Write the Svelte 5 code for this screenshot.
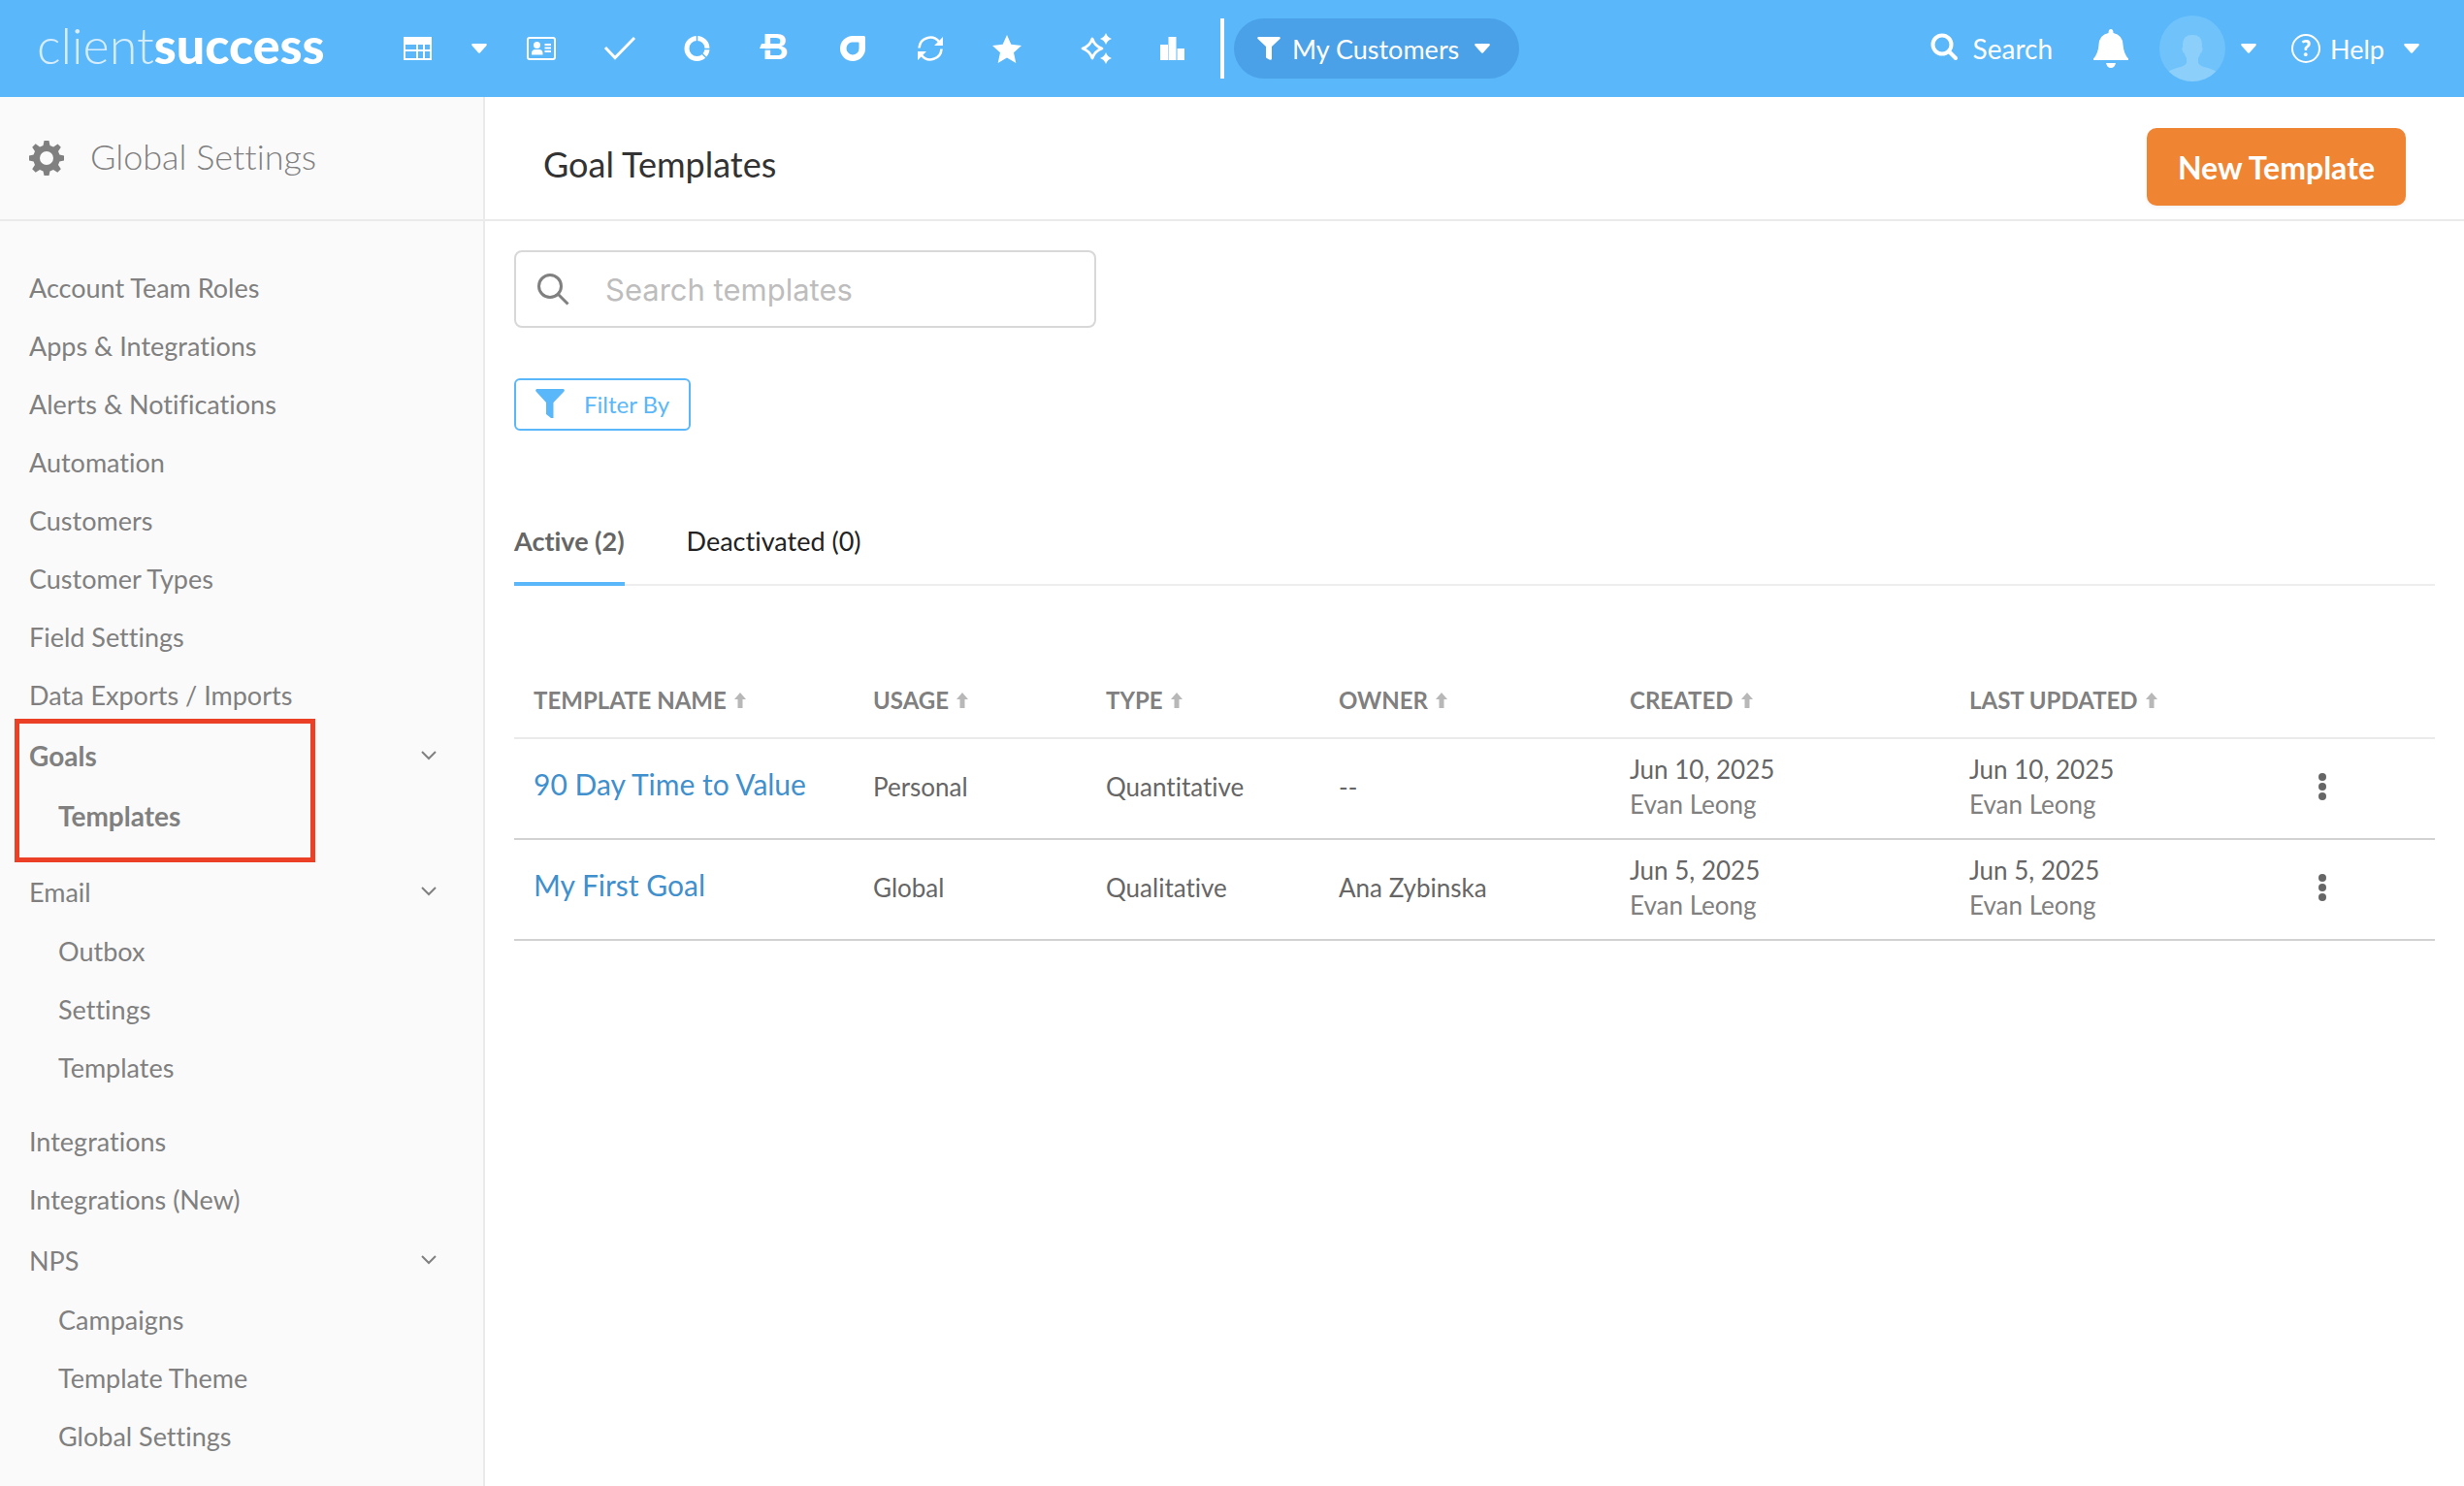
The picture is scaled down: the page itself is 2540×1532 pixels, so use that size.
<script lang="ts">
    interface NavItem {
        label: string;
        children?: string[];
    }

    interface Template {
        name: string;
        usage: string;
        type: string;
        owner: string;
        created: string;
        createdBy: string;
        updated: string;
        updatedBy: string;
    }

    const settings: NavItem[] = [
        { label: "Account Team Roles" },
        { label: "Apps & Integrations" },
        { label: "Alerts & Notifications" },
        { label: "Automation" },
        { label: "Customers" },
        { label: "Customer Types" },
        { label: "Field Settings" },
        { label: "Data Exports / Imports" },
        { label: "Goals", children: ["Templates"] },
        { label: "Email", children: ["Outbox", "Settings", "Templates"] },
        { label: "Integrations" },
        { label: "Integrations (New)" },
        { label: "NPS", children: ["Campaigns", "Template Theme", "Global Settings"] },
    ];

    const columns = ["Template Name", "Usage", "Type", "Owner", "Created", "Last Updated"];

    const templates: Template[] = [
        {
            name: "90 Day Time to Value",
            usage: "Personal",
            type: "Quantitative",
            owner: "--",
            created: "Jun 10, 2025",
            createdBy: "Evan Leong",
            updated: "Jun 10, 2025",
            updatedBy: "Evan Leong",
        },
        {
            name: "My First Goal",
            usage: "Global",
            type: "Qualitative",
            owner: "Ana Zybinska",
            created: "Jun 5, 2025",
            createdBy: "Evan Leong",
            updated: "Jun 5, 2025",
            updatedBy: "Evan Leong",
        },
    ];

    let activeGroup = $state("Goals");
    let closed = $state<string[]>([]);
    let tab = $state("active");
    let search = $state("");

    let rows = $derived(
        tab === "active"
            ? templates.filter((t) => t.name.toLowerCase().includes(search.toLowerCase()))
            : [],
    );

    function toggleGroup(label: string) {
        closed = closed.includes(label)
            ? closed.filter((item) => item !== label)
            : [...closed, label];
    }
</script>

{#snippet caret()}
    <svg class="caret" viewBox="0 0 16 10" fill="currentColor" aria-hidden="true">
        <path d="M1 0h14q1.500 .6 .5 2L9 9.300q-1 1-2 0L.5 2Q-.5 .6 1 0z" />
    </svg>
{/snippet}

<header class="topbar">
    <a class="logo" href="#home"><span>client</span><strong>success</strong></a>

    <nav class="tools" aria-label="Main">
        <a href="#dashboard" aria-label="Dashboard">
            <svg viewBox="0 0 32 32">
                <path
                    fill="currentColor"
                    fill-rule="evenodd"
                    d="M2 4h29v24H2zM4 12v5h11v-5zM17 12v5h5v-5zM24 12v5h5v-5zM4 19v7h11v-7zM17 19v7h5v-7zM24 19v7h5v-7z"
                />
            </svg>
        </a>
        <button class="slim" aria-label="More dashboards">{@render caret()}</button>
        <a href="#contacts" aria-label="Contacts">
            <svg viewBox="0 0 32 32" fill="currentColor">
                <rect x="2" y="5" width="28" height="22" rx="2" fill="none" stroke="currentColor" stroke-width="2" />
                <circle cx="11.500" cy="12.500" r="3.500" />
                <path d="M6 22.500V21q0-4 4-4h3.500q4 0 4 4v1.500z" />
                <path d="M19.500 12h6.500M19.500 15.500h6.500M19.500 19h6.500" stroke="currentColor" stroke-width="1.800" />
            </svg>
        </a>
        <a href="#tasks" aria-label="Tasks">
            <svg viewBox="0 0 32 32">
                <path d="M2 15l10 10.500L32 5" fill="none" stroke="currentColor" stroke-width="3" />
            </svg>
        </a>
        <a href="#lifecycle" aria-label="Lifecycle">
            <svg viewBox="0 0 32 32" fill="none">
                <circle cx="16.500" cy="16" r="10.500" stroke="currentColor" stroke-width="5" />
                <path class="cut" d="M16.500 9V2M22 16.500h8M22 21.500l5 5" />
            </svg>
        </a>
        <a href="#billing" aria-label="Billing">
            <svg viewBox="0 0 32 32">
                <text class="mark" x="4" y="27">B</text>
                <path class="cut" d="M6 17h15" />
                <path fill="currentColor" d="M3 11h19v5H1z" />
            </svg>
        </a>
        <a href="#pulse" aria-label="Pulse">
            <svg viewBox="0 0 32 32">
                <path
                    fill="currentColor"
                    fill-rule="evenodd"
                    d="M17 3h11.500q1.500 0 1.500 1.500V16A13 13 0 1 1 17 3zM18 9.500a6.500 6.500 0 1 0 5.500 6.500v-5.500q0-1-1-1z"
                />
            </svg>
        </a>
        <a href="#renewals" aria-label="Renewals">
            <svg viewBox="0 0 32 32" fill="none" stroke="currentColor" stroke-width="2.600">
                <path d="M5.500 15.500A11.500 11.500 0 0 1 26 9M28.500 16.500A11.500 11.500 0 0 1 8 23" />
                <path d="M30 4v9h-9zM4 28v-9h9z" fill="currentColor" stroke="none" />
            </svg>
        </a>
        <a href="#favorites" aria-label="Favorites">
            <svg viewBox="0 0 32 32" fill="currentColor">
                <path d="M16 2l4.300 9.800L31 13l-8 7.200L25.300 31 16 25.400 6.700 31 9 20.200 1 13l10.700-1.200z" />
            </svg>
        </a>
        <a class="spaced" href="#insights" aria-label="Insights">
            <svg viewBox="0 0 32 32">
                <path
                    d="M12 6q2.500 7.500 10 10-7.500 2.500-10 10Q9.500 18.500 2 16q7.500-2.500 10-10z"
                    fill="none"
                    stroke="currentColor"
                    stroke-width="2.800"
                    stroke-linejoin="round"
                />
                <path
                    fill="currentColor"
                    d="M26 0q1.500 4.500 6 6-4.500 1.500-6 6-1.500-4.500-6-6 4.500-1.500 6-6zM26 20q1.500 4.500 6 6-4.500 1.500-6 6-1.500-4.500-6-6 4.500-1.500 6-6z"
                />
            </svg>
        </a>
        <a href="#reports" aria-label="Reports">
            <svg viewBox="0 0 32 32" fill="currentColor">
                <path d="M2 12h8v16H2zM10.500 4h8v24h-8zM19.500 16h7.500v12h-7.500z" />
            </svg>
        </a>
    </nav>

    <div class="segment">
        <button class="pill">
            <svg class="funnel" viewBox="0 0 24 24" fill="currentColor">
                <path d="M1 0h22q1.500 .8 .5 2L15 10v13q-.5 1-2 .8L9.800 22Q9 21.500 9 20.500V10L.5 2Q-.5 .8 1 0z" />
            </svg>
            My Customers
            {@render caret()}
        </button>
    </div>

    <div class="account">
        <button class="find">
            <svg viewBox="0 0 28 28" fill="none" stroke="currentColor" stroke-width="4">
                <circle cx="12" cy="12" r="9.500" />
                <path d="M19 19l7 7" stroke-linecap="round" />
            </svg>
            Search
        </button>
        <button class="bell" aria-label="Notifications">
            <svg viewBox="0 0 36 40" fill="currentColor">
                <path d="M18 0q2.500 0 2.500 4Q30 6 30.500 16q.5 9 5.500 14.500V32H0v-1.500Q5 25 5.500 16 6 6 15.500 4 15.500 0 18 0zM13 35h10q-1 5-5 5t-5-5z" />
            </svg>
        </button>
        <button class="profile" aria-label="Account">
            <svg class="avatar" viewBox="0 0 68 68">
                <circle cx="34" cy="34" r="34" fill="#70c3fa" />
                <path
                    fill="#8ccffb"
                    d="M34 20q10 0 10 9.500 0 1.500-.3 3 1.600.5.600 3.500-.6 2.500-2 3Q41.500 42 40 43.500V49q2 3 8 4.500 7 2 10.300 4.200A34 34 0 0 1 9.700 57.700Q13 55.500 20 53.500q6-1.500 8-4.500v-5.500Q26.500 42 25.700 39q-1.400-.5-2-3-1-3 .6-3.500-.3-1.500-.3-3Q24 20 34 20z"
                />
            </svg>
            {@render caret()}
        </button>
        <button class="help">
            <span class="question">?</span>
            Help
            {@render caret()}
        </button>
    </div>
</header>

<div class="layout">
    <aside>
        <h2>
            <svg viewBox="0 0 36 36">
                <path
                    fill="currentColor"
                    fill-rule="evenodd"
                    d="M15.500 0h5l1 5 3.600 1.500L29.500 3.500 32.800 6.800 30 11l1.400 3.500L36 15.500v5l-4.600 1L30 25l2.800 4.300-3.500 3.500L25 30l-3.500 1.400-1 4.600h-5l-1-4.600L11 30l-4.300 2.800-3.500-3.500L6 25l-1.400-3.500L0 20.500v-5l4.600-1L6 11 3.200 6.700l3.500-3.500L11 6.500 14.500 5zM18 11a7 7 0 1 0 0 14 7 7 0 1 0 0-14z"
                />
            </svg>
            <span>Global Settings</span>
        </h2>

        <nav class="menu" aria-label="Global settings">
            {#each settings as item}
                {#if item.children}
                    <div class="group" class:current={activeGroup === item.label}>
                        <button
                            class="group-toggle"
                            aria-expanded={!closed.includes(item.label)}
                            onclick={() => toggleGroup(item.label)}
                        >
                            {item.label}
                            <svg viewBox="0 0 16 10" fill="none" stroke="currentColor" stroke-width="2">
                                <path d="M1 1l7 7 7-7" />
                            </svg>
                        </button>
                        {#if !closed.includes(item.label)}
                            {#each item.children as child}
                                <a class="child" href="#settings" onclick={() => (activeGroup = item.label)}>
                                    {child}
                                </a>
                            {/each}
                        {/if}
                    </div>
                {:else}
                    <a href="#settings">{item.label}</a>
                {/if}
            {/each}
        </nav>
    </aside>

    <main>
        <div class="page-head">
            <h1>Goal Templates</h1>
            <button class="primary">New Template</button>
        </div>

        <div class="content">
            <label class="search-box">
                <svg viewBox="0 0 32 32" fill="none" stroke="currentColor" stroke-width="3">
                    <circle cx="13" cy="13" r="11.500" />
                    <path d="M21.500 21.500l10 10" />
                </svg>
                <input type="text" placeholder="Search templates" aria-label="Search templates" bind:value={search} />
            </label>

            <button class="filter">
                <svg viewBox="0 0 30 30" fill="currentColor">
                    <path d="M1 0h28q1.500 1 .5 2.500L18.500 14v16h-2.500l-5-4V14L.5 2.500Q-.5 1 1 0z" />
                </svg>
                Filter By
            </button>

            <div class="tabs" role="tablist">
                <button role="tab" aria-selected={tab === "active"} onclick={() => (tab = "active")}>
                    Active (2)
                </button>
                <button role="tab" aria-selected={tab === "deactivated"} onclick={() => (tab = "deactivated")}>
                    Deactivated (0)
                </button>
            </div>

            <table>
                <colgroup>
                    <col class="wide" />
                    <col class="narrow" />
                    <col class="narrow" />
                    <col class="medium" />
                    <col class="wide" />
                    <col class="wide" />
                    <col />
                </colgroup>
                <thead>
                    <tr>
                        {#each columns as column}
                            <th scope="col">
                                <button class="sort">
                                    {column}
                                    <svg viewBox="0 0 12 16" fill="currentColor">
                                        <path d="M6 0l6 7H8.500v9h-5V7H0z" />
                                    </svg>
                                </button>
                            </th>
                        {/each}
                        <th></th>
                    </tr>
                </thead>
                <tbody>
                    {#each rows as row}
                        <tr>
                            <td><a class="name" href="#template">{row.name}</a></td>
                            <td>{row.usage}</td>
                            <td>{row.type}</td>
                            <td>{row.owner}</td>
                            <td>
                                {row.created}
                                <span class="by">{row.createdBy}</span>
                            </td>
                            <td>
                                {row.updated}
                                <span class="by">{row.updatedBy}</span>
                            </td>
                            <td>
                                <button class="more" aria-label="Actions for {row.name}">
                                    <svg viewBox="0 0 8 28" fill="currentColor">
                                        <circle cx="4" cy="4" r="4" />
                                        <circle cx="4" cy="14" r="4" />
                                        <circle cx="4" cy="24" r="4" />
                                    </svg>
                                </button>
                            </td>
                        </tr>
                    {/each}
                </tbody>
            </table>
        </div>
    </main>
</div>

<style>
    :global(body) {
        margin: 0;
        background: #fff;
        color: #666;
        font-family: Lato, "Open Sans", sans-serif;
        font-size: 27px;
        font-variant-ligatures: none;
    }

    :global(#app) {
        min-height: 100vh;
        display: flex;
        flex-direction: column;
    }

    a {
        color: inherit;
        text-decoration: none;
    }

    button {
        padding: 0;
        border: none;
        background: none;
        color: inherit;
        font: inherit;
        font-variant-ligatures: none;
        cursor: pointer;
    }

    svg {
        display: block;
        flex: none;
        overflow: visible;
    }

    .topbar {
        display: flex;
        align-items: center;
        box-sizing: border-box;
        height: 100px;
        padding: 0 46px 0 38px;
        background: #5ab7fa;
        color: #fff;
    }

    .logo {
        width: 352px;
        padding-bottom: 8px;
        font-size: 52px;
        line-height: 56px;
    }

    .logo span {
        font-weight: 300;
        opacity: 0.75;
    }

    .logo strong {
        font-weight: 900;
    }

    .tools {
        display: flex;
        align-items: center;
    }

    .tools a,
    .tools button {
        display: flex;
        justify-content: center;
        width: 80px;
    }

    .tools .slim {
        width: 48px;
    }

    .tools .spaced {
        margin-left: 12px;
    }

    .tools a svg {
        width: 32px;
        height: 32px;
    }

    .cut {
        fill: none;
        stroke: #5ab7fa;
        stroke-width: 1.5;
    }

    .mark {
        fill: currentColor;
        font-family: "Liberation Sans", sans-serif;
        font-size: 37px;
        font-weight: 700;
    }

    .caret {
        width: 16px;
        height: 10px;
    }

    .segment {
        margin-left: 8px;
        padding-left: 10px;
        border-left: 4px solid #fff;
    }

    .pill {
        display: flex;
        align-items: center;
        gap: 12px;
        height: 62px;
        padding: 0 30px 0 24px;
        border-radius: 31px;
        background: #4aa1e7;
    }

    .pill .caret {
        margin-left: 4px;
    }

    .funnel {
        width: 24px;
        height: 24px;
    }

    .account {
        display: flex;
        align-items: center;
        margin-left: auto;
    }

    .find,
    .profile,
    .help {
        display: flex;
        align-items: center;
        gap: 16px;
    }

    .find {
        font-size: 28px;
    }

    .find svg {
        width: 28px;
        height: 28px;
        padding-bottom: 4px;
    }

    .bell {
        margin: 0 32px 0 42px;
    }

    .bell svg {
        width: 36px;
        height: 40px;
    }

    .avatar {
        width: 68px;
        height: 68px;
    }

    .help {
        gap: 10px;
        margin-left: 36px;
    }

    .help .caret {
        margin-left: 10px;
    }

    .question {
        box-sizing: border-box;
        width: 30px;
        height: 30px;
        border: 2px solid #fff;
        border-radius: 50%;
        font-size: 22px;
        font-weight: 900;
        line-height: 26px;
    }

    .layout {
        display: flex;
        flex: 1;
    }

    aside {
        box-sizing: border-box;
        flex: none;
        width: 500px;
        border-right: 2px solid #eaeaea;
        background: #fafafa;
        color: #808080;
    }

    h1,
    h2 {
        margin: 0;
        font-size: 36px;
        font-weight: 400;
    }

    h1 {
        padding-bottom: 6px;
        color: #333;
    }

    h2 {
        display: flex;
        align-items: center;
        gap: 27px;
        box-sizing: border-box;
        height: 128px;
        padding: 0 30px;
        border-bottom: 2px solid #eaeaea;
        font-weight: 300;
    }

    h2 span {
        padding-bottom: 4px;
    }

    h2 svg {
        width: 36px;
        height: 36px;
    }

    .menu {
        padding: 40px 0 20px;
    }

    .menu a {
        display: block;
        padding: 0 0 2px 30px;
        line-height: 58px;
    }

    .menu .child {
        padding-left: 60px;
    }

    .group {
        position: relative;
        padding-bottom: 16px;
    }

    .group-toggle {
        display: flex;
        align-items: center;
        justify-content: space-between;
        box-sizing: border-box;
        width: 100%;
        height: 64px;
        padding: 0 48px 2px 30px;
    }

    .group-toggle svg {
        width: 16px;
        height: 10px;
    }

    .current {
        font-size: 28px;
        font-weight: 700;
    }

    .current::after {
        content: "";
        position: absolute;
        top: -7px;
        left: 15px;
        box-sizing: border-box;
        width: 310px;
        height: 148px;
        border: 5px solid #ec4026;
        pointer-events: none;
    }

    main {
        flex: 1;
        min-width: 0;
    }

    .page-head {
        display: flex;
        align-items: center;
        justify-content: space-between;
        box-sizing: border-box;
        height: 128px;
        padding: 18px 60px 0;
        border-bottom: 2px solid #eaeaea;
    }

    .primary {
        height: 80px;
        padding: 0 32px;
        border-radius: 10px;
        background: #ef8533;
        box-shadow: 0 2px 4px rgb(0 0 0 / 0.06);
        color: #fff;
        font-size: 32px;
        font-weight: 700;
    }

    .content {
        padding: 30px 30px 60px;
    }

    .search-box {
        display: flex;
        align-items: center;
        gap: 38px;
        box-sizing: border-box;
        width: 600px;
        height: 80px;
        padding: 0 22px;
        border: 2px solid #d8d8d8;
        border-radius: 8px;
        color: #808080;
    }

    .search-box svg {
        width: 32px;
        height: 32px;
    }

    .search-box input {
        flex: 1;
        min-width: 0;
        padding: 0;
        border: none;
        outline: none;
        background: none;
        color: #333;
        font-family: Inter, sans-serif;
        font-size: 31px;
    }

    .search-box input::placeholder {
        color: #bdbdbd;
    }

    .filter {
        display: flex;
        align-items: center;
        gap: 20px;
        box-sizing: border-box;
        height: 54px;
        margin-top: 52px;
        padding: 0 20px 2px;
        border: 2px solid #5ab7fa;
        border-radius: 6px;
        color: #5ab7fa;
        font-size: 24px;
    }

    .filter svg {
        width: 30px;
        height: 30px;
    }

    .tabs {
        display: flex;
        gap: 64px;
        margin-top: 70px;
        box-shadow: inset 0 -2px #eee;
    }

    .tabs button {
        height: 90px;
        border-bottom: 4px solid transparent;
        color: #222;
    }

    .tabs button[aria-selected="true"] {
        border-bottom-color: #5ab7fa;
        color: #666;
        font-weight: 700;
    }

    table {
        width: 100%;
        margin-top: 79px;
        border-collapse: collapse;
        table-layout: fixed;
        font-size: 26px;
        line-height: 36px;
    }

    .wide {
        width: 350px;
    }

    .medium {
        width: 300px;
    }

    .narrow {
        width: 240px;
    }

    th,
    td {
        box-sizing: border-box;
        padding: 0 20px;
        text-align: left;
    }

    th {
        height: 78px;
        border-bottom: 2px solid #eaeaea;
        color: #808080;
        font-size: 24px;
    }

    td {
        height: 104px;
        padding-bottom: 4px;
        border-bottom: 2px solid #d2d2d2;
    }

    .sort {
        display: flex;
        align-items: center;
        gap: 8px;
        text-transform: uppercase;
    }

    .sort svg {
        width: 12px;
        height: 16px;
        color: #b8b8b8;
    }

    .name {
        display: block;
        padding-bottom: 6px;
        color: #3f90cc;
        font-size: 30px;
    }

    .by {
        display: block;
        color: #808080;
    }

    .more {
        display: block;
        padding: 0 10px;
    }

    .more svg {
        width: 8px;
        height: 28px;
    }
</style>
